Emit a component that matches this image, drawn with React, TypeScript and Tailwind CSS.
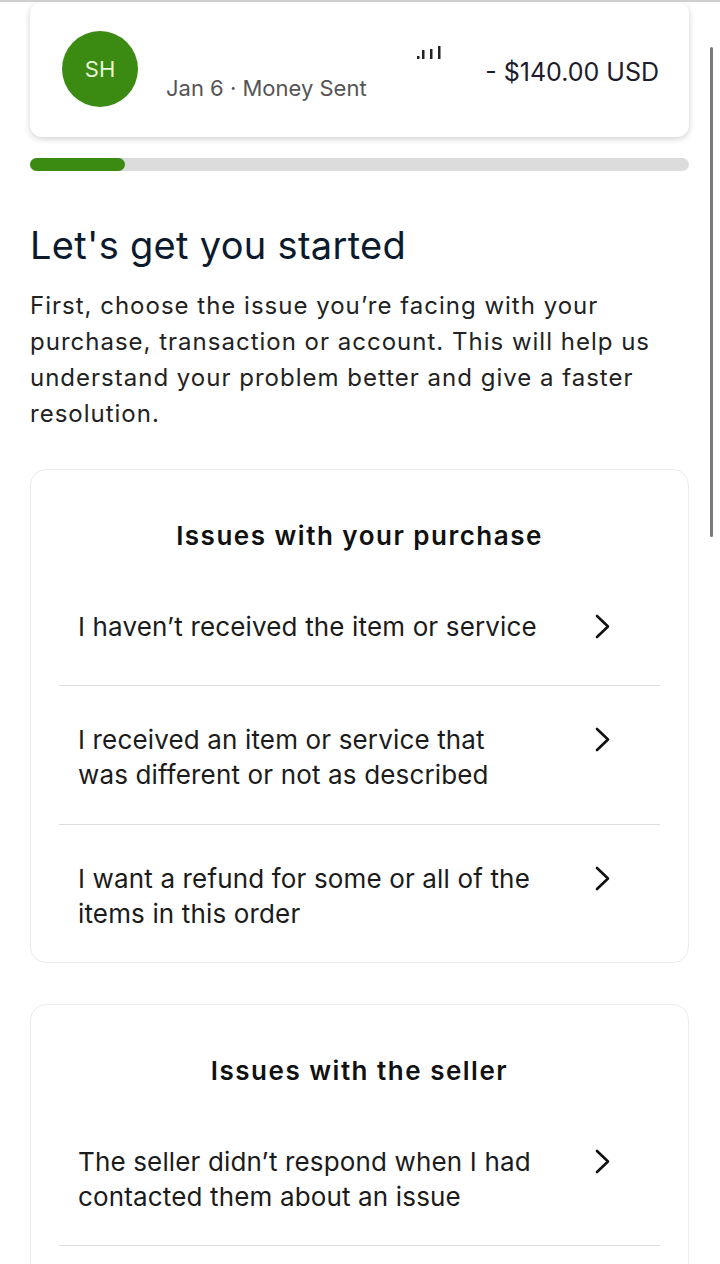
type Issue = { lines: string[]; pb: string }

const purchaseIssues: Issue[] = [
  { lines: ["I haven’t received the item or service"], pb: "pb-[41px]" },
  { lines: ["I received an item or service that", "was different or not as described"], pb: "pb-[32px]" },
  { lines: ["I want a refund for some or all of the", "items in this order"], pb: "pb-[31px]" },
]

const sellerIssues: Issue[] = [
  { lines: ["The seller didn’t respond when I had", "contacted them about an issue"], pb: "pb-[31px]" },
  { lines: [""], pb: "pb-[31px]" },
]

const Chevron = () => (
  <svg width="15" height="25" viewBox="0 0 15 25" fill="none" className="shrink-0">
    <polyline
      points="2,2 13,12.5 2,23"
      stroke="#111"
      strokeWidth="2.6"
      strokeLinecap="round"
      strokeLinejoin="round"
    />
  </svg>
)

const SignalBars = () => (
  <svg width="26" height="14" viewBox="0 0 26 14" fill="#222">
    <rect x="0" y="10" width="2.5" height="3" />
    <rect x="5" y="4" width="2.5" height="9" />
    <rect x="13" y="3" width="2.5" height="10" />
    <rect x="21" y="0" width="2.5" height="13" />
  </svg>
)

const IssueRow = ({ issue, divider }: { issue: Issue; divider: boolean }) => (
  <div className={divider ? "border-b border-[#dedede]" : ""}>
    <div className={`flex items-start justify-between pl-[19px] pr-[50px] pt-[36px] ${issue.pb}`}>
      <p className="whitespace-nowrap text-[26px] leading-[35px] tracking-[0.15px] text-[#1b1b1b]">
        {issue.lines.map((l, i) => (
          <span key={i} className="block">
            {l || "\u00a0"}
          </span>
        ))}
      </p>
      <div className="mt-[5px]">
        <Chevron />
      </div>
    </div>
  </div>
)

const IssueCard = ({ title, issues }: { title: string; issues: Issue[] }) => (
  <div className="rounded-2xl border border-[#ececec] bg-white px-[28px] pt-[51px]">
    <h3 className="text-center text-[26px] font-semibold leading-[30px] tracking-[1.5px] text-[#111]">
      {title}
    </h3>
    <div className="mt-[22px]">
      {issues.map((issue, i) => (
        <IssueRow key={i} issue={issue} divider={i < issues.length - 1} />
      ))}
    </div>
  </div>
)

export default function App() {
  return (
    <div
      className="relative h-[1264px] overflow-hidden border-t-2 border-[#cfcfcf] bg-white pl-[30px] pr-[31px]"
      style={{ fontFamily: "Inter, 'Liberation Sans', sans-serif" }}
    >
      {/* transaction summary */}
      <div className="flex h-[135px] items-start rounded-xl bg-white pl-8 pr-[30px] shadow-[0_2px_6px_rgba(0,0,0,0.18)]">
        <div className="mt-[29px] flex h-[76px] w-[76px] shrink-0 items-center justify-center rounded-full bg-[#3b8a12] text-[22px] text-[#e6f5d8]">
          SH
        </div>
        <div className="ml-7 mt-[70px] text-[22px] text-[#555]">Jan 6 · Money Sent</div>
        <div className="ml-auto mr-[42px] mt-[44px]">
          <SignalBars />
        </div>
        <div className="mt-[52px] text-[25px] text-[#1c1c2c]">- $140.00 USD</div>
      </div>

      {/* progress */}
      <div className="mt-[21px] h-[13px] w-full rounded-full bg-[#dcdcdc]">
        <div className="h-full w-[95px] rounded-full bg-[#3b8a12]" />
      </div>

      <h1 className="mt-[52px] text-[38px] leading-[44px] tracking-[0.3px] text-[#0c1a2e]">
        Let's get you started
      </h1>
      <p className="mt-[21px] text-[24px] leading-[36px] tracking-[1px] text-[#222]">
        First, choose the issue you’re facing with your purchase, transaction or account. This will
        help us understand your problem better and give a faster resolution.
      </p>

      <div className="mt-[37px] flex flex-col gap-[41px]">
        <IssueCard title="Issues with your purchase" issues={purchaseIssues} />
        <IssueCard title="Issues with the seller" issues={sellerIssues} />
      </div>

      {/* scrollbar thumb overlay */}
      <div className="absolute right-[7px] top-[45px] h-[490px] w-[3px] rounded-full bg-[#7a7a7a]" />
    </div>
  )
}
